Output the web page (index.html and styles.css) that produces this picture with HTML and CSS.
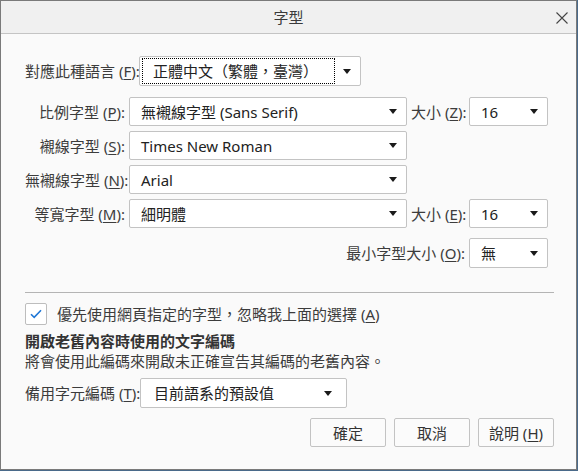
FILE: index.html
```
<!DOCTYPE html>
<html lang="zh-Hant">
<head>
<meta charset="utf-8">
<link rel="stylesheet" href="styles.css">
</head>
<body>
<div class="window">
  <div class="titlebar">
    <span class="title">字型</span>
    <svg class="close" width="12" height="12" viewBox="0 0 12 12"><path d="M0.5 0.5L11.5 11.5M11.5 0.5L0.5 11.5" stroke="#444" stroke-width="1.1" fill="none"/></svg>
  </div>
  <div class="content">
    <div class="lang-row">
      <span class="label lang-label">對應此種語言 (<u>F</u>):</span>
      <div class="select lang-select">
        <span class="focus">正體中文（繁體，臺灣）</span>
        <span class="arrow"></span>
      </div>
    </div>

    <div class="font-grid">
      <span class="label">比例字型 (<u>P</u>):</span>
      <div class="select"><span class="value">無襯線字型 (Sans Serif)</span><span class="arrow"></span></div>
      <span class="label">大小 (<u>Z</u>):</span>
      <div class="select"><span class="value">16</span><span class="arrow"></span></div>

      <span class="label">襯線字型 (<u>S</u>):</span>
      <div class="select"><span class="value">Times New Roman</span><span class="arrow"></span></div>
      <span></span><span></span>

      <span class="label">無襯線字型 (<u>N</u>):</span>
      <div class="select"><span class="value">Arial</span><span class="arrow"></span></div>
      <span></span><span></span>

      <span class="label">等寬字型 (<u>M</u>):</span>
      <div class="select"><span class="value">細明體</span><span class="arrow"></span></div>
      <span class="label">大小 (<u>E</u>):</span>
      <div class="select"><span class="value">16</span><span class="arrow"></span></div>
    </div>

    <div class="font-grid min-grid">
      <span class="label min-label">最小字型大小 (<u>O</u>):</span>
      <div class="select"><span class="value">無</span><span class="arrow"></span></div>
    </div>

    <div class="rule"></div>

    <div class="check-row">
      <span class="checkbox"><svg width="12" height="10" viewBox="0 0 12 10"><path d="M1 5.2L4.2 8.4L11 1.2" stroke="#1f77d6" stroke-width="1.6" fill="none"/></svg></span>
      <span class="check-text">優先使用網頁指定的字型，忽略我上面的選擇 (<u>A</u>)</span>
    </div>

    <div class="heading">開啟老舊內容時使用的文字編碼</div>
    <div class="desc">將會使用此編碼來開啟未正確宣告其編碼的老舊內容。</div>

    <div class="enc-row">
      <span class="label enc-label">備用字元編碼 (<u>T</u>):</span>
      <div class="select enc-select"><span class="value">目前語系的預設值</span><span class="arrow"></span></div>
    </div>

    <div class="buttons">
      <div class="button">確定</div>
      <div class="button">取消</div>
      <div class="button">說明 (<u>H</u>)</div>
    </div>
  </div>
</div>
</body>
</html>
```
FILE: styles.css
```
* { box-sizing: border-box; }
html, body { margin: 0; padding: 0; }
body {
  background: #4a6a8a;
  font-family: "Noto Sans", "Noto Sans CJK TC", sans-serif;
  font-size: 15px;
  color: #333;
}
u { text-decoration: underline; text-underline-offset: 2px; text-decoration-thickness: 1px; }

.window {
  width: 577px;
  height: 470px;
  border: 1px solid #7a7a7a;
  background: #fafafa;
  display: flex;
  flex-direction: column;
}
.titlebar {
  height: 33px;
  flex: none;
  background: #f0f0f0;
  border-bottom: 1px solid #c4c4c4;
  display: flex;
  align-items: center;
  justify-content: center;
  position: relative;
}
.title { font-size: 15px; color: #3a3a3a; line-height: 20px; }
.close { position: absolute; right: 8px; top: 11px; }

.content {
  padding: 22px 22px 0 24px;
  display: flex;
  flex-direction: column;
}

.label { color: #3c3c3c; line-height: 20px; white-space: nowrap; }

.select {
  height: 29px;
  border: 1px solid #c3c3c3;
  border-radius: 2px;
  background: #fff;
  display: flex;
  align-items: center;
  position: relative;
  color: #222;
  line-height: 20px;
}
.select .value { padding-left: 11px; flex: 1; white-space: nowrap; overflow: hidden; }
.arrow {
  width: 0; height: 0;
  border-left: 4px solid transparent;
  border-right: 4px solid transparent;
  border-top: 5px solid #1a1a1a;
  margin-right: 9px;
  flex: none;
}

.lang-row { display: flex; align-items: center; gap: 4px; }
.lang-label { width: 110px; text-align: right; }
.lang-select { width: 222px; height: 30px; }
.lang-select .focus {
  margin-left: 2px;
  width: 193px;
  height: 26px;
  border: 1px dotted #000;
  padding-left: 10px;
  display: flex;
  align-items: center;
  white-space: nowrap;
  overflow: hidden;
  margin-right: 8px;
}

.font-grid {
  margin-top: 11px;
  display: grid;
  grid-template-columns: 100px 278px 54px 79px;
  grid-auto-rows: 29px;
  column-gap: 4px;
  row-gap: 5px;
  align-items: center;
}
.font-grid .label { text-align: right; }
.min-grid { margin-top: 10px; grid-template-columns: 440px 79px; grid-auto-rows: 30px; }
.min-grid .select { height: 30px; }

.rule { margin-top: 24px; height: 1px; background: #b4b4b4; }

.check-row { margin-top: 10px; display: flex; align-items: center; gap: 10px; height: 22px; }
.checkbox {
  width: 22px; height: 22px;
  border: 1px solid #bdbdbd;
  border-radius: 2px;
  background: #fff;
  display: flex; align-items: center; justify-content: center;
  flex: none;
}
.check-text { color: #3c3c3c; line-height: 20px; }

.heading { margin-top: 6px; font-weight: bold; line-height: 20px; color: #333; }
.desc { line-height: 20px; color: #3c3c3c; }

.enc-row { margin-top: 7px; display: flex; align-items: center; gap: 4px; }
.enc-label { width: 111px; }
.enc-select { width: 207px; height: 30px; }
.enc-select .value { padding-left: 13px; }
.enc-select .arrow { margin-right: 14px; }

.buttons { margin-top: 10px; display: flex; justify-content: flex-end; gap: 8px; }
.button {
  width: 76px; height: 29px;
  border: 1px solid #c3c3c3;
  border-radius: 2px;
  background: #fbfbfb;
  display: flex; align-items: center; justify-content: center;
  color: #333;
  line-height: 20px;
}
```
